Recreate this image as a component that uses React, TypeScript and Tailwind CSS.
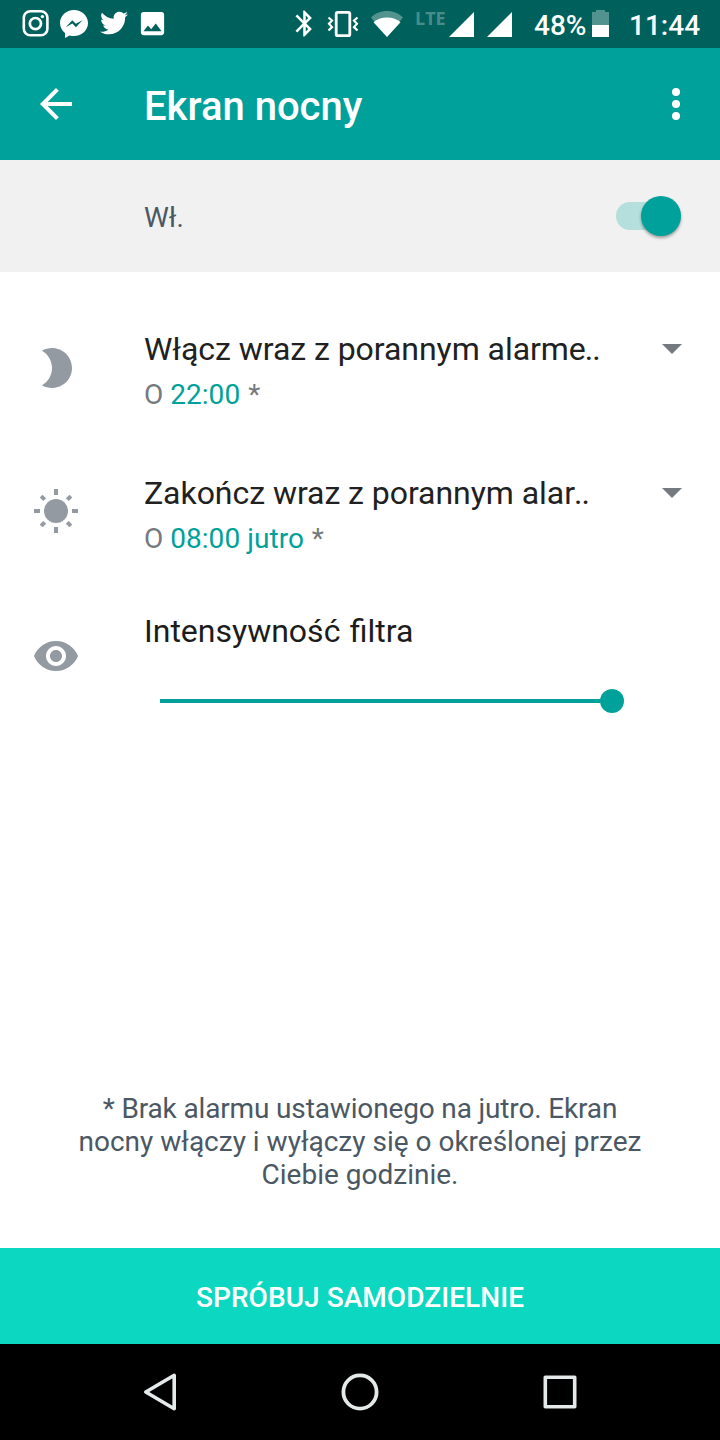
import type { ReactNode } from 'react'
import { FaTwitter } from 'react-icons/fa6'
import { MdBluetooth, MdBrightness2, MdImage, MdVisibility } from 'react-icons/md'

function StatusBar() {
  return (
    <header className="flex h-12 items-start bg-[#00605c] text-white">
      <svg className="ml-[22px] mt-[10px] shrink-0" width="27" height="27" viewBox="0 0 27 27" fill="none" stroke="currentColor">
        <rect x="1.8" y="1.3" width="23.6" height="24" rx="6.5" strokeWidth="2.6" />
        <circle cx="13.4" cy="13.6" r="5.6" strokeWidth="2.7" />
        <circle cx="20.4" cy="6.6" r="1.7" fill="currentColor" stroke="none" />
      </svg>
      <svg className="ml-[11px] mt-[10px] shrink-0" width="28" height="28" viewBox="0 0 28 28">
        <path d="M14 0C6.200 0 0 5.700 0 13c0 4 1.900 7.500 5 9.900V28l4.600-2.600c1.400.4 2.900.6 4.400.6 7.800 0 14-5.700 14-13S21.800 0 14 0z" fill="currentColor" />
        <path d="M5.700 17.200 12.300 10.200 15.800 13.800 22.400 10.200 15.900 17.200 12.400 13.600z" fill="#00605c" />
      </svg>
      <FaTwitter className="ml-3 mt-[9px] shrink-0" size={28} />
      <MdImage className="ml-[9px] mt-2 shrink-0" size={31} />

      <MdBluetooth className="ml-[121px] mt-2 shrink-0" size={31} />
      <svg className="ml-[7px] mt-[10px] shrink-0" width="32" height="28" viewBox="0 0 32 28" fill="none" stroke="currentColor">
        <rect x="9.2" y="2.3" width="13.6" height="23.4" rx="1.5" strokeWidth="2.8" />
        <path d="M1.500 7.500 5 10.500l-3 3.300 3 3.300-3.500 3.400M30.500 7.500 27 10.500l3 3.300-3 3.300 3.500 3.400" strokeWidth="2.2" />
      </svg>
      <svg className="ml-3 mt-[10px] shrink-0" width="32" height="28" viewBox="0 0 32 28">
        <path d="M16 27 0 7.600C4.300 3.300 9.500 1 16 1s11.700 2.300 16 6.600z" fill="currentColor" opacity="0.32" />
        <path d="M16 27 2.500 12.200C5.800 9.300 10.500 7.500 16 7.500s10.200 1.800 13.500 4.700z" fill="currentColor" />
      </svg>
      <span className="ml-3 mt-2 w-[34px] shrink-0 font-['Open_Sans'] text-[18px] leading-5 font-bold text-white/30">LTE</span>
      <svg className="mt-3 shrink-0" width="25" height="25" viewBox="0 0 25 25" fill="currentColor">
        <path d="M25 0v25H0z" />
      </svg>
      <svg className="ml-[13px] mt-3 shrink-0" width="25" height="25" viewBox="0 0 25 25" fill="currentColor">
        <path d="M25 0v25H0z" />
      </svg>
      <span className="ml-[22px] mt-[10px] w-[58px] shrink-0 text-[28px] leading-8 font-medium">48%</span>
      <svg className="mt-[10px] shrink-0" width="17" height="27" viewBox="0 0 17 27" fill="currentColor">
        <path d="M4 0h9v2h4v13H0V2h4z" opacity="0.32" />
        <path d="M0 15h17v12H0z" />
      </svg>
      <span className="ml-5 mt-[10px] shrink-0 text-[28px] leading-8 font-medium">11:44</span>
    </header>
  )
}

function AppBar() {
  return (
    <div className="flex h-28 items-center bg-[#00a19b] pr-5 pl-8 text-white">
      <svg className="shrink-0" width="48" height="48" viewBox="0 0 24 24" fill="none" stroke="currentColor" strokeWidth="2">
        <path d="M20 12H5.500M12.700 4.700 5.400 12l7.300 7.300" />
      </svg>
      <h1 className="mt-1 ml-16 flex-1 text-[40px] leading-[47px] font-medium">Ekran nocny</h1>
      <svg className="shrink-0" width="48" height="48" viewBox="0 0 48 48" fill="currentColor">
        <circle cx="24" cy="12" r="4" />
        <circle cx="24" cy="24" r="4" />
        <circle cx="24" cy="36" r="4" />
      </svg>
    </div>
  )
}

function SunIcon() {
  return (
    <svg className="-mt-px" width="48" height="48" viewBox="0 0 48 48" fill="currentColor">
      <circle cx="24" cy="24" r="12" />
      {[0, 45, 90, 135, 180, 225, 270, 315].map(angle => (
        <rect key={angle} x="22" y={angle % 90 ? 3 : 2} width="4" height={angle % 90 ? 5 : 6} transform={`rotate(${angle} 24 24)`} />
      ))}
    </svg>
  )
}

type ScheduleRowProps = {
  icon: ReactNode
  title: string
  time: string
}

// title is cut short with two tight dots, the small ellipsis
function ScheduleRow({ icon, title, time }: ScheduleRowProps) {
  return (
    <div className="flex h-36 items-start pl-8">
      <div className="mt-[14px] w-28 shrink-0 text-[#949aa2]">{icon}</div>
      <div className="flex-1">
        <p className="text-[32px] leading-[38px] tracking-[-0.05px] whitespace-nowrap text-[#212121]">
          {title}
          <span className="-ml-px tracking-[-0.8px]">..</span>
        </p>
        <p className="mt-[10px] text-[28px] leading-[33px] text-[#757980]">
          O <span className="mr-px tracking-[0.05px] text-[#00a19b]">{time}</span> *
        </p>
      </div>
      <svg className="mt-[14px] mr-[38px] shrink-0" width="20" height="10" viewBox="0 0 20 10" fill="#757980">
        <path d="M0 0h20L10 10z" />
      </svg>
    </div>
  )
}

export default function App() {
  return (
    <div className="flex h-[1440px] w-[720px] flex-col overflow-hidden bg-white font-[Roboto,sans-serif]">
      <StatusBar />
      <AppBar />

      {/* Master switch */}
      <div className="flex h-28 items-center justify-between bg-[#f1f1f1] pr-[39px] pl-36">
        <span className="mt-[2px] text-[28px] leading-[33px] text-[#4b5863]">Wł.</span>
        <div className="flex h-7 w-[65px] items-center justify-end rounded-full bg-[#b4dfdc]">
          <div className="size-10 rounded-full bg-[#00a19b] shadow-[0_2px_3px_rgba(0,0,0,0.35)]" />
        </div>
      </div>

      {/* Settings */}
      <main className="flex-1 pt-[58px]">
        <ScheduleRow icon={<MdBrightness2 size={48} />} title="Włącz wraz z porannym alarme" time="22:00" />
        <ScheduleRow icon={<SunIcon />} title="Zakończ wraz z porannym alar" time="08:00 jutro" />
        <div className="flex items-start pl-8">
          <div className="mt-[14px] w-28 shrink-0 text-[#949aa2]">
            <MdVisibility size={48} />
          </div>
          <div className="-mt-[6px]">
            <p className="text-[32px] leading-[38px] text-[#1c1c1c] [word-spacing:1.5px]">Intensywność filtra</p>
            <div className="mt-[39px] ml-4 flex h-6 w-[464px] items-center">
              <div className="h-1 flex-1 bg-[#00a19b]" />
              <div className="size-6 rounded-full bg-[#00a19b]" />
            </div>
          </div>
        </div>
      </main>

      <p className="px-16 pb-[57px] text-center text-[28px] leading-[33px] text-[#4b5863]">
        <span className="tracking-[-0.15px]">* Brak alarmu ustawionego na jutro. Ekran</span>
        <br />
        nocny włączy i wyłączy się o określonej przez
        <br />
        Ciebie godzinie.
      </p>

      <button className="flex h-24 shrink-0 items-center justify-center bg-[#0cd8c2] pt-[3px] text-[28px] font-medium tracking-[0.06px] text-white">
        SPRÓBUJ SAMODZIELNIE
      </button>

      {/* Android navigation */}
      <nav className="flex h-24 shrink-0 items-center justify-center gap-[152px] bg-black text-[#e4e9ea]">
        <svg width="48" height="48" viewBox="0 0 48 48" fill="none" stroke="currentColor" strokeWidth="3.600" strokeLinejoin="round">
          <path d="M38.200 7.300v33.400L9.800 24z" />
        </svg>
        <svg width="48" height="48" viewBox="0 0 48 48" fill="none" stroke="currentColor" strokeWidth="3.800">
          <circle cx="24" cy="24" r="16.600" />
        </svg>
        <svg width="48" height="48" viewBox="0 0 48 48" fill="none" stroke="currentColor" strokeWidth="3.600" strokeLinejoin="round">
          <rect x="9.300" y="9.300" width="29.400" height="29.400" />
        </svg>
      </nav>
    </div>
  )
}
